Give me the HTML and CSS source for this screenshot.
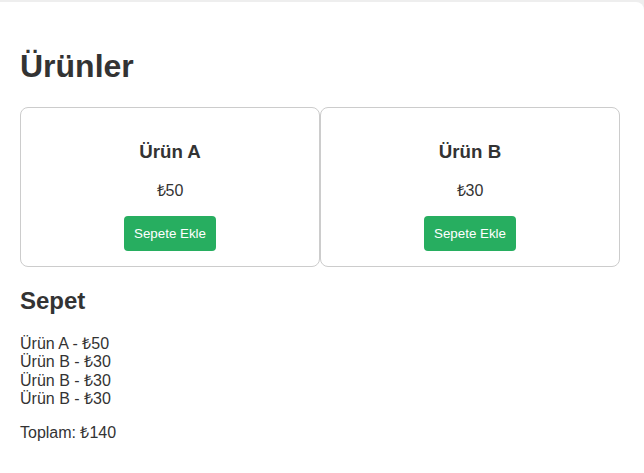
FILE: index.html
```html
<!DOCTYPE html>
<html lang="tr">
<head>
<meta charset="utf-8">
<title>Ürünler</title>
<link rel="stylesheet" href="styles.css">
</head>
<body>
<div class="page">
  <h1 class="title">Ürünler</h1>
  <div class="products">
    <div class="card">
      <h3 class="card-name">Ürün A</h3>
      <p class="card-price">₺50</p>
      <button class="add-btn">Sepete Ekle</button>
    </div>
    <div class="card">
      <h3 class="card-name">Ürün B</h3>
      <p class="card-price">₺30</p>
      <button class="add-btn">Sepete Ekle</button>
    </div>
  </div>
  <h2 class="cart-title">Sepet</h2>
  <div class="cart-list">
    <div class="cart-item">Ürün A - ₺50</div>
    <div class="cart-item">Ürün B - ₺30</div>
    <div class="cart-item">Ürün B - ₺30</div>
    <div class="cart-item">Ürün B - ₺30</div>
  </div>
  <p class="total">Toplam: ₺140</p>
</div>
</body>
</html>
```
FILE: styles.css
```css
html, body {
  margin: 0;
  padding: 0;
  background: #eeeeee;
}
body {
  font-family: "Liberation Sans", Arial, sans-serif;
  font-size: 16px;
  line-height: 18.4px;
  color: #333333;
}
.page {
  margin-top: 2px;
  background: #ffffff;
  border-top-right-radius: 8px;
  padding: 25px 20px 20px;
  min-height: 471px;
  box-sizing: border-box;
}
.title {
  font-size: 32px;
  line-height: 36.8px;
  margin: 21.44px 0;
}
.products {
  display: flex;
}
.card {
  width: 300px;
  box-sizing: border-box;
  border: 1px solid #cccccc;
  border-radius: 8px;
  padding: 15px;
  text-align: center;
}
.card-name {
  font-size: 18.72px;
  line-height: 21.5px;
  margin: 18.72px 0;
}
.card-price {
  margin: 16px 0;
}
.add-btn {
  font-family: "Liberation Sans", Arial, sans-serif;
  font-size: 13.333px;
  line-height: 15.3px;
  color: #ffffff;
  background: #27ae60;
  border: none;
  border-radius: 4px;
  padding: 10px;
  cursor: pointer;
}
.cart-title {
  font-size: 24px;
  line-height: 27.6px;
  margin: 19.92px 0;
}
.total {
  margin: 16px 0;
}
```
